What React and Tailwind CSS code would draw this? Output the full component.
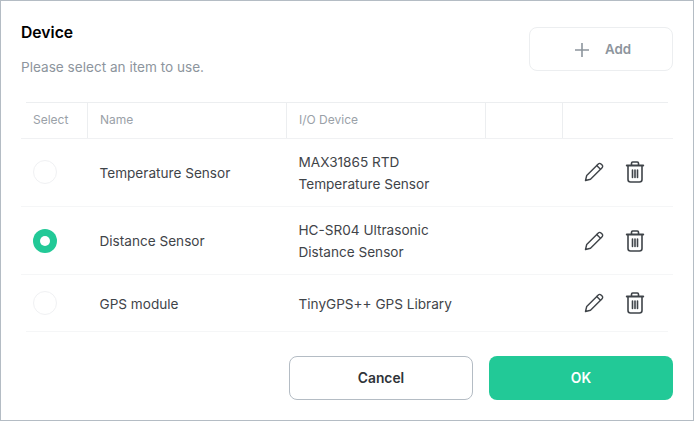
const rows = [
  { name: "Temperature Sensor", device: ["MAX31865 RTD", "Temperature Sensor"], height: "h-[68px]", line: true, nudge: "-mt-[2px]" },
  { name: "Distance Sensor", device: ["HC-SR04 Ultrasonic", "Distance Sensor"], height: "h-[68px]", line: true, selected: true, nudge: "" },
  { name: "GPS module", device: ["TinyGPS++ GPS Library"], height: "h-[56px]", nudge: "" },
];

function PencilIcon() {
  return (
    <svg width="22" height="22" viewBox="0 0 22 22" fill="none" stroke="#3f4449" strokeWidth="1.4" strokeLinejoin="round" strokeLinecap="round">
      <path d="M2.500 19.500l1.200-5L15.300 2.900a1.900 1.900 0 0 1 2.700 0l1.100 1.100a1.900 1.900 0 0 1 0 2.700L7.500 18.300z" />
      <path d="M13.700 4.500l3.800 3.800" />
    </svg>
  );
}

function TrashIcon() {
  return (
    <svg width="20" height="24" viewBox="0 0 20 24" fill="none" stroke="#3f4449" strokeWidth="1.6" strokeLinejoin="round" strokeLinecap="round">
      <path d="M1.800 5.500h16.400" strokeWidth="2" />
      <path d="M6.500 5V3.200c0-.7.500-1.200 1.200-1.200h4.600c.7 0 1.200.5 1.200 1.200V5" />
      <path d="M3 6v13.500C3 21 4 22 5.500 22h9c1.500 0 2.500-1 2.500-2.500V6" />
      <path d="M7.500 10v7.500M10 10v7.500M12.500 10v7.500" />
    </svg>
  );
}

function Radio({ selected }) {
  if (selected) {
    return (
      <div className="flex h-6 w-6 items-center justify-center rounded-full bg-[#22c997]">
        <div className="h-[10px] w-[10px] rounded-full bg-white" />
      </div>
    );
  }
  return <div className="h-6 w-6 rounded-full border border-[#f0f1f3] bg-white" />;
}

export default function App() {
  return (
    <div className="h-[421px] w-[694px] border border-[#b4bcc4] bg-white pl-5 pr-5 font-['Inter',sans-serif]">
      <div className="flex h-[101px] items-start justify-between">
        <div>
          <h1 className="mt-[22px] text-[15.7px] leading-5 font-semibold text-black">Device</h1>
          <p className="mt-[14px] text-[13.6px] leading-5 text-[#8d959d]">Please select an item to use.</p>
        </div>
        <button className="mt-[26px] flex h-11 w-36 items-center justify-center gap-[16px] rounded-lg border border-[#eceef0] bg-white pt-[2px] pl-[4px] text-[13.3px] font-semibold text-[#8d959d]">
          <svg width="14" height="14" viewBox="0 0 14 14" stroke="#8d959d" strokeWidth="1.6">
            <path d="M7 0v14M0 7h14" />
          </svg>
          Add
        </button>
      </div>

      <div className="mx-[5px] h-px bg-[#eceef0]" />
      <div className="grid h-[36px] grid-cols-[67px_199px_199px_77px_110px] items-stretch border-b border-[#f0f1f3] text-xs text-[#9aa1a8]">
        <div className="flex items-center border-r border-[#eceef0] pb-[2px] pl-3">Select</div>
        <div className="flex items-center border-r border-[#eceef0] pb-[2px] pl-3">Name</div>
        <div className="flex items-center border-r border-[#eceef0] pb-[2px] pl-3">I/O Device</div>
        <div className="border-r border-[#eceef0]" />
        <div />
      </div>

      {rows.map((row) => (
        <div
          key={row.name}
          className={`grid grid-cols-[67px_199px_199px_77px_110px] items-center text-[13.6px] text-[#3f4449] ${row.height} ${row.line ? "border-b border-[#f5f6f7]" : ""}`}
        >
          <div className={`pl-3 ${row.nudge}`}>
            <Radio selected={row.selected} />
          </div>
          <div className="pt-[2px] pl-[11.5px]">{row.name}</div>
          <div className={`pl-[11.5px] leading-[22px] ${row.device.length === 1 ? "pt-[2px]" : ""}`}>
            {row.device.map((line) => (
              <div key={line}>{line}</div>
            ))}
          </div>
          <div />
          <div className={`flex items-center gap-[19.5px] pl-[20px] ${row.nudge}`}>
            <PencilIcon />
            <TrashIcon />
          </div>
        </div>
      ))}
      <div className="mx-[5px] h-px bg-[#f5f6f7]" />

      <div className="mt-6 flex justify-end gap-4">
        <button className="h-11 w-[184px] rounded-lg border border-[#b4bcc4] bg-white text-[13.8px] font-semibold text-[#2f3439]">
          Cancel
        </button>
        <button className="h-11 w-[184px] rounded-lg bg-[#22c997] text-[13.8px] font-semibold text-white">OK</button>
      </div>
    </div>
  );
}
